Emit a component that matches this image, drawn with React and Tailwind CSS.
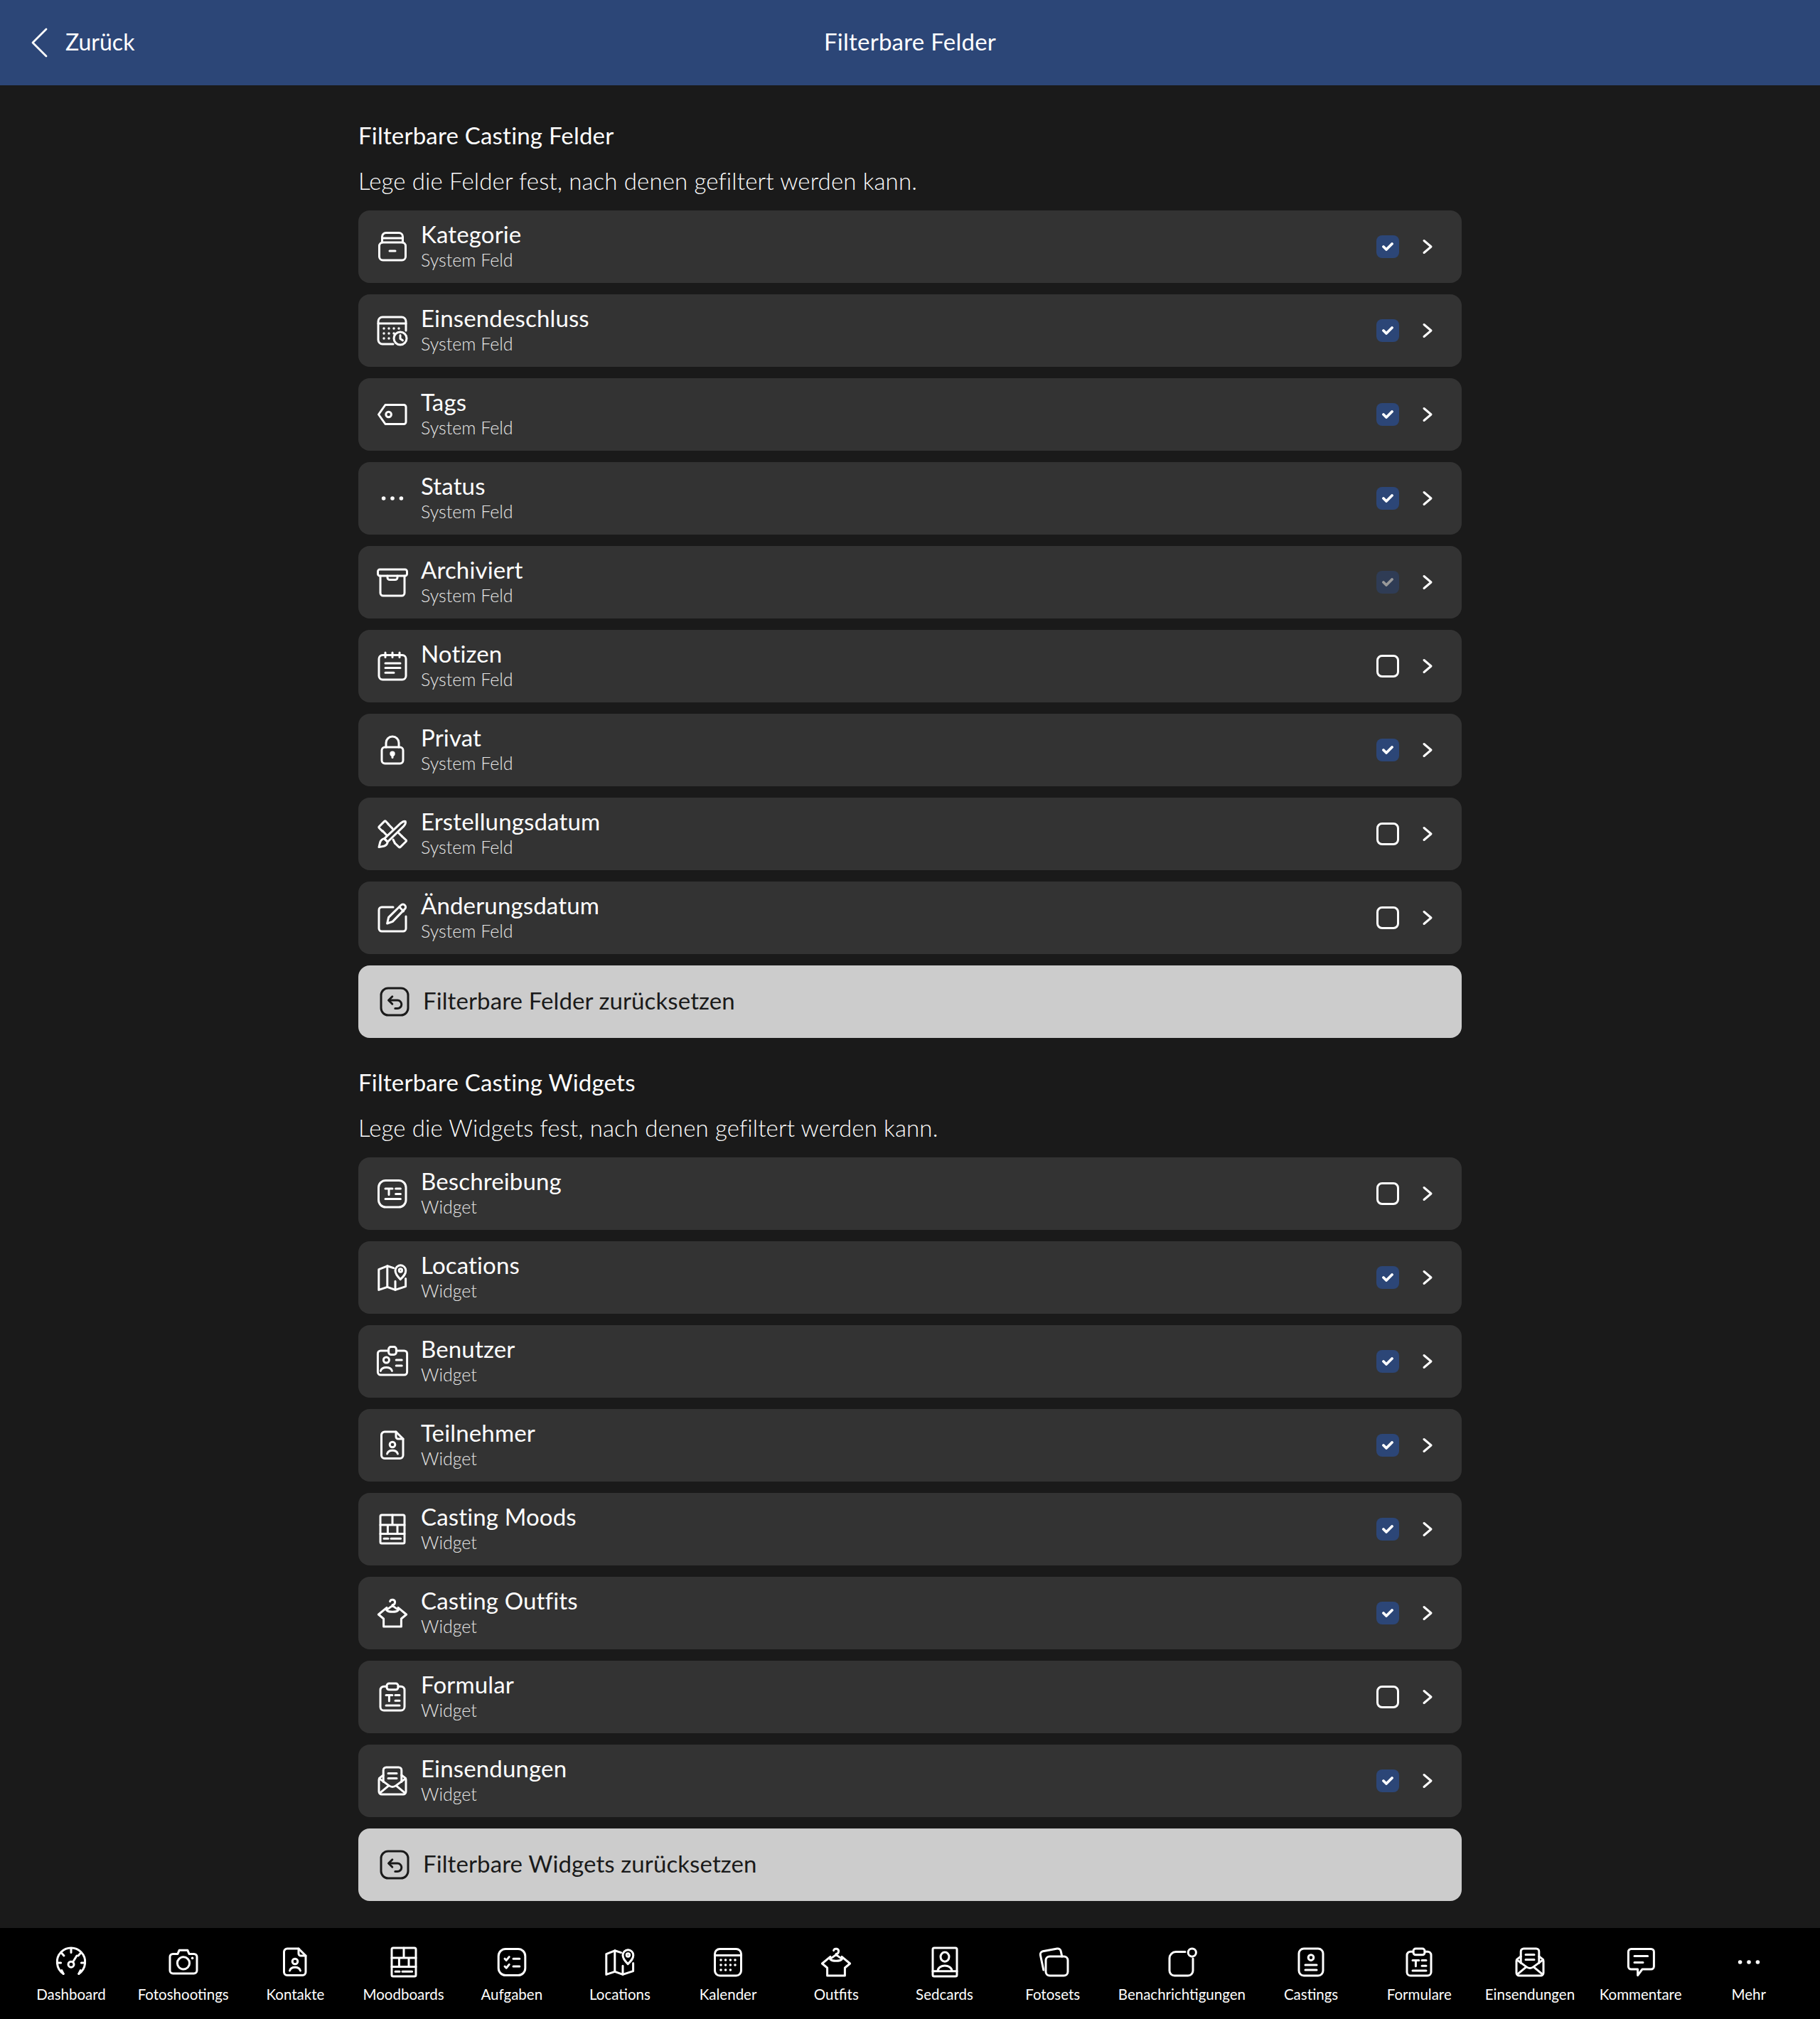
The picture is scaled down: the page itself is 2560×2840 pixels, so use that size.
const icons = {
  drawer: (
    <>
      <path d="M4.75 9V5a2.75 2.75 0 0 1 2.75-2.75h9A2.75 2.75 0 0 1 19.25 5v4" />
      <path d="M4.75 6h14.5" />
      <rect x="2.75" y="9" width="18.5" height="12.5" rx="2.5" />
      <path d="M10 15h4" />
    </>
  ),
  deadline: (
    <>
      <path d="M21.5 12V5.500a3 3 0 0 0-3-3H5a3 3 0 0 0-3 3v13a3 3 0 0 0 3 3h7.500" />
      <path d="M2 7h19.5" />
      <path d="M6 10.500h.01M9.500 10.500h.01M13 10.500h.01M16.500 10.500h.01M6 14h.01M9.500 14h.01M13 14h.01M6 17.500h.01M9.500 17.500h.01" strokeWidth="1.700" />
      <circle cx="17.500" cy="17.500" r="4.500" />
      <path d="M17.500 15.300v2.400l1.700 1.200" />
    </>
  ),
  tag: (
    <>
      <path d="M7 5.250h13a1.500 1.500 0 0 1 1.500 1.500v10.500a1.500 1.500 0 0 1-1.500 1.500H7L2.250 12z" />
      <circle cx="9.300" cy="12" r="1.900" />
    </>
  ),
  dots: (
    <>
      <circle cx="5.800" cy="12" r="1.400" fill="currentColor" stroke="none" />
      <circle cx="12" cy="12" r="1.400" fill="currentColor" stroke="none" />
      <circle cx="18.200" cy="12" r="1.400" fill="currentColor" stroke="none" />
    </>
  ),
  archive: (
    <>
      <rect x="1.750" y="3" width="20.500" height="4.500" rx="1.400" />
      <path d="M3.500 7.500v12a2 2 0 0 0 2 2h13a2 2 0 0 0 2-2v-12" />
      <path d="M8.500 7.500v1.200a1.600 1.600 0 0 0 1.600 1.600h3.800a1.600 1.600 0 0 0 1.600-1.600V7.500" />
    </>
  ),
  notes: (
    <>
      <rect x="2.500" y="4.250" width="19" height="17.250" rx="2.600" />
      <path d="M7 2.500v3.200M12 2.500v3.200M17 2.500v3.200" />
      <path d="M7 10h10.500M7 13.200h10.500M7 16.600h6" />
    </>
  ),
  lock: (
    <>
      <rect x="4.500" y="10" width="15" height="11.500" rx="2.200" />
      <path d="M7.500 10V7a4.500 4.500 0 0 1 9 0v3" />
      <circle cx="12" cy="14.600" r="1.100" fill="currentColor" />
      <path d="M12 15v2.200" />
    </>
  ),
  tools: (
    <>
      <path d="M9.300 5.300 7.400 3.200a.8.8 0 0 0-1.100 0L2.700 6.800a.8.8 0 0 0 0 1.100L5 10.200" />
      <path d="m18.700 13.700 2.800 2.600a.8.8 0 0 1 0 1.100l-3.900 3.800a.8.8 0 0 1-1.100 0l-2.800-2.700" />
      <path d="M8.900 5 12 8.200M5 9.800l3 3.200M12.500 16l1.200 2.500M16 11l2.700 2.700" />
      <path d="M8.600 17.600 6.300 15.300 17.700 4.600c1.100-1 2.600-1.700 3.400-1.400.4.900-.3 2.400-1.300 3.500z" />
      <path d="M6.300 15.300c-1.600.3-2.600 1.200-3 2.700l-.8 3.300 3.400-.7c1.500-.4 2.500-1.300 2.700-3z" />
    </>
  ),
  edit: (
    <>
      <path d="M12.500 4.500H4.500a2 2 0 0 0-2 2v13a2 2 0 0 0 2 2h15a2 2 0 0 0 2-2V11" />
      <path d="m8.300 16 1-4.300 8.700-8.600c.8-.8 2-.8 2.700 0 .8.800.8 2 0 2.700l-8.600 8.900z" />
      <path d="m16.800 4.400 3 3" />
    </>
  ),
  reset: (
    <>
      <rect x="2.500" y="2.500" width="19" height="19" rx="5" />
      <path d="M10.400 8.400 7.800 11l2.600 2.600" />
      <path d="M8 11h6a2.900 2.900 0 0 1 0 5.800h-1.600" />
    </>
  ),
  text: (
    <>
      <rect x="2.250" y="2.750" width="19.250" height="18.750" rx="5" />
      <path d="M7 8.500h5M9.500 8.500v4.200M14.300 8.500h3.400M14.300 12.200h3.400M7 15.800h10.700" />
    </>
  ),
  map: (
    <>
      <path d="M12.800 5.300 8.400 3.900 2.400 6.300v14.400l6-2 5.600 2 7.300-2.400v-5.500" />
      <path d="M8.400 3.900v14.800M14 14.600v6" />
      <path d="M17.600 13.300c-2-2-3.600-3.700-3.600-6.200a3.700 3.700 0 0 1 7.400 0c0 2.500-1.700 4.200-3.800 6.200z" />
      <circle cx="17.700" cy="7" r="1.100" />
    </>
  ),
  badge: (
    <>
      <path d="M9.300 4.500H3.700a2 2 0 0 0-2 2v13a2 2 0 0 0 2 2h16.600a2 2 0 0 0 2-2v-13a2 2 0 0 0-2-2h-5.600" />
      <rect x="9.300" y="1.750" width="5.400" height="5.500" rx="1.600" />
      <circle cx="7.700" cy="11" r="2" />
      <path d="M3.700 18.700c1-3.200 7-3.200 8 0M14.600 11h4M14.600 15h4" />
    </>
  ),
  person: (
    <>
      <path d="M6.500 2.500h8l5 5V19a2.250 2.250 0 0 1-2.250 2.250H6.500A2.250 2.250 0 0 1 4.250 19V4.750A2.250 2.250 0 0 1 6.500 2.500z" />
      <path d="M14.500 2.500V6A1.500 1.500 0 0 0 16 7.500h3.500" />
      <circle cx="12" cy="11.500" r="1.900" />
      <path d="M8.300 18c.8-3.200 6.600-3.200 7.400 0" />
    </>
  ),
  grid: (
    <>
      <rect x="3.500" y="2" width="17" height="20" rx="1" />
      <path d="M3.500 9h17M12 2v7M3.500 15.200h17M8.700 9v6.200M15.500 9v6.200M6 18.600h3M11 18.600h6.800" />
    </>
  ),
  shirt: (
    <>
      <path d="M8 8.200 2.200 13l3.600 3v5.500h12.400V16l3.600-3L16 8.200" />
      <path d="M10.300 3.800A1.800 1.800 0 1 1 12 6.200v.6L7.800 9.800c1.700 1.800 6.700 1.800 8.400 0L12 6.800" />
    </>
  ),
  clipboard: (
    <>
      <path d="M8 4.600H6a2.500 2.500 0 0 0-2.500 2.500v12A2.500 2.500 0 0 0 6 21.500h12a2.500 2.500 0 0 0 2.500-2.500V7.100A2.500 2.500 0 0 0 18 4.600h-2" />
      <rect x="8" y="2.500" width="8" height="4.400" rx="1.600" />
      <path d="M7.500 10.700h4.400M9.700 10.700v4.200M14 10.700h3M14 14.600h3M7.500 18h9.500" />
    </>
  ),
  mail: (
    <>
      <path d="M5.600 8 3.300 9.700a2 2 0 0 0-.8 1.500V19.500a2 2 0 0 0 2 2h15a2 2 0 0 0 2-2v-8.300a2 2 0 0 0-.8-1.500L18.400 8" />
      <path d="M5.600 12.600V4.500a2 2 0 0 1 2-2h8.800a2 2 0 0 1 2 2v8.100" />
      <path d="m2.700 10.300 6.800 5c1.500 1.100 3.500 1.100 5 0l6.800-5M3 20.700l6.500-5.400M21 20.700l-6.500-5.400" />
      <path d="M9 6.800h6M9 10.300h6" />
    </>
  ),
  gauge: (
    <>
      <path d="M6.600 20.200A10 10 0 0 1 5 4.900 10 10 0 0 1 19 4.900a10 10 0 0 1-1.600 15.300" />
      <path d="M12 2.400v2.800M5.400 5.700l1.600 1.800M18.600 5.700 17 7.500M2.200 12.500h2.600M19.200 12.500h2.600M6.600 20.200 5.400 17.800M17.400 20.200l1.200-2.400" />
      <circle cx="12" cy="13.600" r="2" />
      <path d="m13.200 12 2.800-4.500" />
    </>
  ),
  camera: (
    <>
      <path d="M8 6.200 9.100 3.600h5.800L16 6.200h3.400a2.100 2.100 0 0 1 2.100 2.100v9.600a2.100 2.100 0 0 1-2.100 2.100H4.600a2.100 2.100 0 0 1-2.100-2.100V8.300a2.100 2.100 0 0 1 2.100-2.100z" />
      <circle cx="12" cy="12.700" r="4.300" />
      <path d="M18.300 9.200h.01" strokeWidth="1.800" />
    </>
  ),
  tasks: (
    <>
      <rect x="2.600" y="2.750" width="18.800" height="18.500" rx="5" />
      <path d="m7 9.600 1.100 1.100 2-2.400M7 15l1.100 1.100 2-2.400M13 9.600h4.400M13 15h4.400" />
    </>
  ),
  calendar: (
    <>
      <rect x="2.750" y="2.750" width="18.500" height="18.750" rx="3.500" />
      <path d="M2.750 7.200h18.500" />
      <path d="M7 10.500h.01M10.300 10.500h.01M13.700 10.500h.01M17 10.500h.01M7 14h.01M10.300 14h.01M13.700 14h.01M17 14h.01M7 17.500h.01M10.300 17.500h.01M13.700 17.500h.01" strokeWidth="1.800" />
    </>
  ),
  sedcard: (
    <>
      <rect x="3.500" y="2" width="17" height="20" rx="1" />
      <ellipse cx="12" cy="8.300" rx="3" ry="3.300" />
      <path d="M3.500 18.400h17M7 18.400c0-5.200 10-5.200 10 0" />
    </>
  ),
  photos: (
    <>
      <rect x="7" y="8" width="15.500" height="13.500" rx="2.800" />
      <path d="M5.400 17.500 3.200 7a2.200 2.200 0 0 1 1.700-2.600L15 2.500a2.200 2.200 0 0 1 2.600 1.800l.8 3.700" />
    </>
  ),
  bell: (
    <>
      <path d="M14.500 4.800H8a4.500 4.500 0 0 0-4.500 4.500V18A3.500 3.500 0 0 0 7 21.500h9.500A3.500 3.500 0 0 0 20 18v-8.500" />
      <circle cx="19.400" cy="5.300" r="2.800" />
    </>
  ),
  casting: (
    <>
      <rect x="3.500" y="2.500" width="17" height="19" rx="3.500" />
      <circle cx="12" cy="8.800" r="1.900" />
      <path d="M8 14h8M8 17.500h8" />
    </>
  ),
  comment: (
    <>
      <path d="M5.200 2.750h14a2 2 0 0 1 2 2V15a2 2 0 0 1-2 2H13l-3.200 4.300V17H5.200a2 2 0 0 1-2-2V4.750a2 2 0 0 1 2-2z" />
      <path d="M7.500 7.700h9.300M7.500 12.300h6" />
    </>
  ),
};

const Icon = ({ name, className = "" }) => (
  <svg
    viewBox="0 0 24 24"
    fill="none"
    stroke="currentColor"
    strokeWidth="1.5"
    strokeLinecap="round"
    strokeLinejoin="round"
    className={`w-12 h-12 shrink-0 ${className}`}
  >
    {icons[name]}
  </svg>
);

const fields = [
  { icon: "drawer", title: "Kategorie", state: "on" },
  { icon: "deadline", title: "Einsendeschluss", state: "on" },
  { icon: "tag", title: "Tags", state: "on" },
  { icon: "dots", title: "Status", state: "on" },
  { icon: "archive", title: "Archiviert", state: "disabled" },
  { icon: "notes", title: "Notizen", state: "off" },
  { icon: "lock", title: "Privat", state: "on" },
  { icon: "tools", title: "Erstellungsdatum", state: "off" },
  { icon: "edit", title: "Änderungsdatum", state: "off" },
];

const widgets = [
  { icon: "text", title: "Beschreibung", state: "off" },
  { icon: "map", title: "Locations", state: "on" },
  { icon: "badge", title: "Benutzer", state: "on" },
  { icon: "person", title: "Teilnehmer", state: "on" },
  { icon: "grid", title: "Casting Moods", state: "on" },
  { icon: "shirt", title: "Casting Outfits", state: "on" },
  { icon: "clipboard", title: "Formular", state: "off" },
  { icon: "mail", title: "Einsendungen", state: "on" },
];

const tabs = [
  { icon: "gauge", label: "Dashboard", width: "w-[120px]" },
  { icon: "camera", label: "Fotoshootings", width: "w-[131px]" },
  { icon: "person", label: "Kontakte", width: "w-[120px]" },
  { icon: "grid", label: "Moodboards", width: "w-[120px]" },
  { icon: "tasks", label: "Aufgaben", width: "w-[120px]" },
  { icon: "map", label: "Locations", width: "w-[120px]" },
  { icon: "calendar", label: "Kalender", width: "w-[120px]" },
  { icon: "shirt", label: "Outfits", width: "w-[120px]" },
  { icon: "sedcard", label: "Sedcards", width: "w-[120px]" },
  { icon: "photos", label: "Fotosets", width: "w-[120px]" },
  { icon: "bell", label: "Benachrichtigungen", width: "w-[179px]" },
  { icon: "casting", label: "Castings", width: "w-[120px]" },
  { icon: "clipboard", label: "Formulare", width: "w-[120px]" },
  { icon: "mail", label: "Einsendungen", width: "w-[127px]" },
  { icon: "comment", label: "Kommentare", width: "w-[120px]" },
  { icon: "dots", label: "Mehr", width: "w-[120px]" },
];

const Checkbox = ({ state }) => {
  if (state === "off") {
    return <div className="w-8 h-8 rounded-lg border-[3px] border-white" />;
  }
  return (
    <div className={`w-8 h-8 rounded-lg bg-[#2c4677] flex items-center justify-center ${state === "disabled" ? "opacity-50" : ""}`}>
      <svg viewBox="0 0 16 12" className="w-4 h-3" fill="none" stroke="white" strokeWidth="3.800" strokeLinecap="round" strokeLinejoin="round">
        <path d="m2 6 4 4 8-8" />
      </svg>
    </div>
  );
};

const Row = ({ icon, title, subtitle, state }) => (
  <div className="flex items-center gap-4 pl-6 pr-8 rounded-2xl bg-[#333333] text-white">
    <Icon name={icon} />
    <div className="flex-1 pt-4 pb-[18px]">
      <div className="text-[33px] leading-[34px] tracking-[0.15px]">{title}</div>
      <div className="mt-1 text-[25px] leading-[30px] font-light text-[#e8e8e8]">{subtitle}</div>
    </div>
    <div className="flex items-center gap-6">
      <Checkbox state={state} />
      <svg viewBox="0 0 32 32" className="w-8 h-8" fill="none" stroke="white" strokeWidth="3" strokeLinecap="round" strokeLinejoin="round">
        <path d="m11 7.500 10 8.500-10 8.500" />
      </svg>
    </div>
  </div>
);

const Section = ({ title, description, rows, subtitle, resetLabel, className }) => (
  <section className={className}>
    <h2 className="text-[33px] leading-10 text-white tracking-[0.2px]">{title}</h2>
    <p className="mt-6 mb-[22px] text-[33px] leading-10 font-light text-white tracking-[0.14px]">{description}</p>
    <div className="flex flex-col gap-4">
      {rows.map((row) => (
        <Row key={row.title} {...row} subtitle={subtitle} />
      ))}
      <button className="h-[102px] flex items-center gap-4 pl-[27px] rounded-2xl bg-[#cccccc] text-[#1a1a1a]">
        <Icon name="reset" />
        <span className="-mt-0.5 text-[33px] tracking-[0.1px]">{resetLabel}</span>
      </button>
    </div>
  </section>
);

export default function App() {
  return (
    <div className="min-h-screen flex flex-col bg-[#1a1a1a] font-['Lato','Noto_Sans',sans-serif]">
      <header className="relative h-[120px] shrink-0 flex items-center justify-center bg-[#2c4677] text-white">
        <div className="absolute left-10 flex items-center gap-[22px]">
          <svg viewBox="0 0 30 42" className="w-[30px] h-[42px]" fill="none" stroke="white" strokeWidth="2.800" strokeLinecap="round" strokeLinejoin="round">
            <path d="M25 2 6 21l19 19" />
          </svg>
          <span className="-mt-0.5 text-[32px]">Zurück</span>
        </div>
        <h1 className="text-[33px] tracking-[0.25px] -mt-0.5">Filterbare Felder</h1>
      </header>

      <main className="flex-1 w-[1552px] mx-auto pt-[50px]">
        <Section
          title="Filterbare Casting Felder"
          description="Lege die Felder fest, nach denen gefiltert werden kann."
          rows={fields}
          subtitle="System Feld"
          resetLabel="Filterbare Felder zurücksetzen"
        />
        <Section
          className="mt-[42px]"
          title="Filterbare Casting Widgets"
          description="Lege die Widgets fest, nach denen gefiltert werden kann."
          rows={widgets}
          subtitle="Widget"
          resetLabel="Filterbare Widgets zurücksetzen"
        />
      </main>

      <nav className="h-32 shrink-0 flex justify-between pt-6 px-10 bg-black text-white">
        {tabs.map((tab) => (
          <div key={tab.label} className={`flex flex-col items-center ${tab.width}`}>
            <Icon name={tab.icon} />
            <span className="mt-[7px] text-[20.5px] leading-7 whitespace-nowrap">{tab.label}</span>
          </div>
        ))}
      </nav>
    </div>
  );
}
